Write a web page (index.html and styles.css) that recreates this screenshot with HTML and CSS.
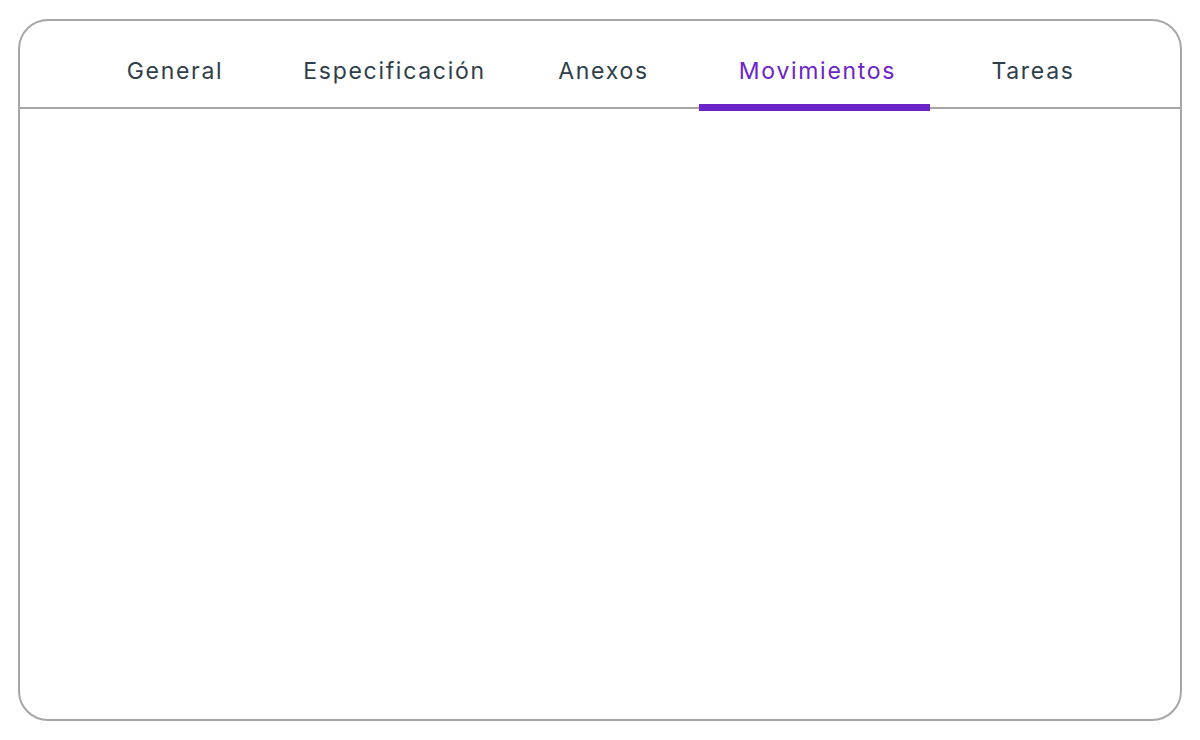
FILE: index.html
```html
<!DOCTYPE html>
<html lang="es">
<head>
<meta charset="utf-8">
<title>Tabs</title>
<link rel="stylesheet" href="styles.css">
</head>
<body>
<div class="card">
  <nav class="tabs">
    <div class="tab tab--general">General</div>
    <div class="tab tab--spec">Especificación</div>
    <div class="tab tab--annex">Anexos</div>
    <div class="tab tab--moves tab--active">Movimientos</div>
    <div class="tab tab--tasks">Tareas</div>
  </nav>
  <div class="panel"></div>
</div>
</body>
</html>
```
FILE: styles.css
```css
html, body {
  margin: 0;
  padding: 0;
  background: #ffffff;
}
body {
  width: 1200px;
  height: 740px;
  overflow: hidden;
  font-family: "Inter", "Noto Sans", sans-serif;
}
.card {
  box-sizing: border-box;
  margin: 19px 18px 0 18px;
  width: 1164px;
  height: 702px;
  border: 2px solid #a6a6a6;
  border-radius: 30px;
  overflow: hidden;
  display: flex;
  flex-direction: column;
}
.tabs {
  display: flex;
  height: 86px;
  padding-left: 48px;
  border-bottom: 2px solid #a6a6a6;
  flex-shrink: 0;
}
.tab {
  position: relative;
  box-sizing: border-box;
  height: 86px;
  padding-top: 35px;
  padding-left: 1px;
  text-align: center;
  font-size: 23px;
  line-height: 30px;
  color: #2f3e4a;
  letter-spacing: 1.7px;
}
.tab--general { width: 213px; }
.tab--spec { width: 226px; }
.tab--annex { width: 192px; }
.tab--moves { width: 231px; padding-left: 6px; }
.tab--tasks { width: 205px; }
.tab--active {
  color: #6a24c8;
}
.tab--active::after {
  content: "";
  position: absolute;
  left: 0;
  right: 0;
  bottom: -4px;
  height: 7px;
  background: #6a24c8;
}
.panel {
  flex: 1;
}
```
